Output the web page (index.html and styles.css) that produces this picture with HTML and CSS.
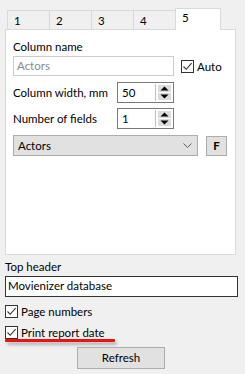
FILE: index.html
```html
<!DOCTYPE html>
<html>
<head>
<meta charset="utf-8">
<link rel="stylesheet" href="styles.css">
</head>
<body>
<div class="window">
  <div class="tabs">
    <div class="tab">1</div>
    <div class="tab">2</div>
    <div class="tab">3</div>
    <div class="tab">4</div>
    <div class="tab active">5</div>
  </div>
  <div class="panel">
    <div class="label">Column name</div>
    <div class="row name-row">
      <div class="input name-input placeholder">Actors</div>
      <label class="check auto">
        <span class="box"><svg width="11" height="11" viewBox="0 0 11 11"><path d="M1.5 5.5 L4.2 8.3 L9.6 2.2" fill="none" stroke="#333" stroke-width="1.1"/></svg></span>
        <span>Auto</span>
      </label>
    </div>
    <div class="row spin-row first">
      <div class="spin-label">Column width, mm</div>
      <div class="input spin">
        <span class="spin-val">50</span>
        <div class="spin-btns">
          <span class="sb"><svg width="9" height="5" viewBox="0 0 9 5"><path d="M0.5 4.5 L4.5 0.5 L8.5 4.5 Z" fill="#000"/></svg></span>
          <span class="sb"><svg width="9" height="5" viewBox="0 0 9 5"><path d="M0.5 0.5 L4.5 4.5 L8.5 0.5 Z" fill="#000"/></svg></span>
        </div>
      </div>
    </div>
    <div class="row spin-row second">
      <div class="spin-label">Number of fields</div>
      <div class="input spin">
        <span class="spin-val">1</span>
        <div class="spin-btns">
          <span class="sb"><svg width="9" height="5" viewBox="0 0 9 5"><path d="M0.5 4.5 L4.5 0.5 L8.5 4.5 Z" fill="#000"/></svg></span>
          <span class="sb"><svg width="9" height="5" viewBox="0 0 9 5"><path d="M0.5 0.5 L4.5 4.5 L8.5 0.5 Z" fill="#000"/></svg></span>
        </div>
      </div>
    </div>
    <div class="row combo-row">
      <div class="combo">
        <span>Actors</span>
        <svg class="chev" width="9" height="5" viewBox="0 0 9 5"><path d="M0.5 0.5 L4.5 4.5 L8.5 0.5" fill="none" stroke="#606060" stroke-width="1"/></svg>
      </div>
      <div class="fbtn">F</div>
    </div>
  </div>
  <div class="bottom">
    <div class="label">Top header</div>
    <div class="input header-input">Movienizer database</div>
    <label class="check line">
      <span class="box"><svg width="11" height="11" viewBox="0 0 11 11"><path d="M1.5 5.5 L4.2 8.3 L9.6 2.2" fill="none" stroke="#333" stroke-width="1.1"/></svg></span>
      <span>Page numbers</span>
    </label>
    <label class="check line second-check">
      <span class="box"><svg width="11" height="11" viewBox="0 0 11 11"><path d="M1.5 5.5 L4.2 8.3 L9.6 2.2" fill="none" stroke="#333" stroke-width="1.1"/></svg></span>
      <span>Print report date</span>
    </label>
    <div class="redline"></div>
    <div class="btn-row"><div class="button">Refresh</div></div>
  </div>
</div>
</body>
</html>
```
FILE: styles.css
```css
html, body {
  margin: 0;
  padding: 0;
  background: #f0f0f0;
}
body {
  font-family: Lato, "Noto Sans", sans-serif;
  font-size: 11.5px;
  color: #000;
  width: 245px;
  height: 374px;
  overflow: hidden;
}
.window {
  padding: 8px 0 0 5px;
}
.tabs {
  display: flex;
  align-items: flex-end;
  height: 21px;
  padding-left: 2px;
}
.tab {
  box-sizing: border-box;
  width: 43px;
  height: 19px;
  margin-right: -1px;
  border: 1px solid #d9d9d9;
  border-bottom: none;
  background: #f0f0f0;
  padding-left: 6px;
  line-height: 19px;
}
.tab.active {
  position: relative;
  z-index: 1;
  width: 46px;
  height: 22px;
  margin-bottom: -1px;
  background: #fff;
  line-height: 18px;
  padding-left: 6px;
}
.panel {
  box-sizing: border-box;
  width: 231px;
  height: 226px;
  background: #fff;
  border: 1px solid #d9d9d9;
  padding: 9px 0 0 7px;
}
.label {
  line-height: 16px;
  height: 16px;
}
.row {
  display: flex;
  align-items: center;
}
.name-row {
  margin-top: 1px;
}
.input {
  box-sizing: border-box;
  background: #fff;
  border: 1px solid #7a7a7a;
  height: 20px;
  line-height: 18px;
  padding-left: 3px;
}
.name-input {
  width: 161px;
  border-color: #cccccc;
  color: #8a8a8a;
}
.check {
  display: flex;
  align-items: center;
}
.box {
  box-sizing: border-box;
  width: 13px;
  height: 13px;
  border: 1px solid #333;
  background: #fff;
  display: flex;
  align-items: center;
  justify-content: center;
  margin-right: 3px;
}
.auto {
  margin-left: 7px;
}
.spin-row.first {
  margin-top: 6px;
}
.spin-row.second {
  margin-top: 5px;
}
.spin-label {
  width: 104px;
  white-space: nowrap;
}
.spin {
  width: 57px;
  height: 21px;
  display: flex;
  align-items: center;
  justify-content: space-between;
  padding-left: 4px;
  padding-right: 2px;
  border-color: #7a7a7a;
}
.spin-btns {
  display: flex;
  flex-direction: column;
  gap: 1px;
  border-left: 1px solid #c0c0c0;
  padding-left: 2px;
  height: 17px;
  justify-content: center;
}
.sb {
  width: 13px;
  height: 7px;
  background: #dcdcdc;
  display: flex;
  align-items: center;
  justify-content: center;
}
.combo-row {
  margin-top: 6px;
}
.combo {
  box-sizing: border-box;
  width: 185px;
  height: 21px;
  background: #e1e1e1;
  border: 1px solid #adadad;
  display: flex;
  align-items: center;
  justify-content: space-between;
  padding: 0 5px 0 4px;
}
.fbtn {
  box-sizing: border-box;
  width: 21px;
  height: 20px;
  margin-left: 8px;
  background: #e1e1e1;
  border: 1px solid #adadad;
  display: flex;
  align-items: center;
  justify-content: center;
  font-weight: bold;
}
.bottom {
  padding-top: 4px;
}
.header-input {
  width: 233px;
  height: 21px;
  border-color: #333;
  padding-left: 2px;
  margin-top: 1px;
}
.line {
  margin-top: 7px;
  height: 14px;
}
.second-check {
  margin-top: 7px;
}
.redline {
  width: 110px;
  height: 3px;
  background: #ee1111;
  border-radius: 1px;
  box-shadow: 2px 3px 3px rgba(0,0,0,0.25);
}
.btn-row {
  padding-left: 72px;
  margin-top: 5px;
}
.button {
  box-sizing: border-box;
  width: 88px;
  height: 22px;
  background: #e1e1e1;
  border: 1px solid #adadad;
  text-align: center;
  line-height: 20px;
}
```
